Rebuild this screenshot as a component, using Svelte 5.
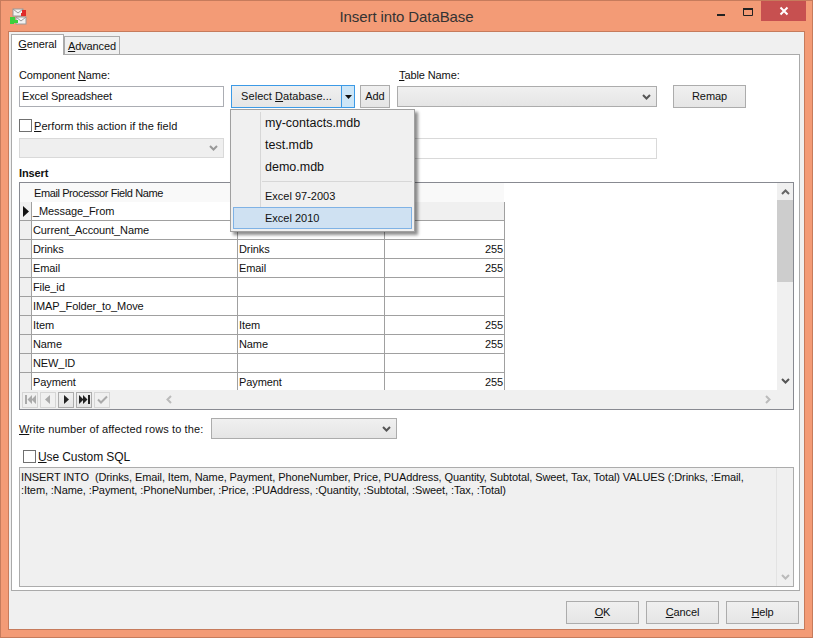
<script lang="ts">
    // grid rows: field name, table column, size
    const rows = [
        ['_Message_From', '', ''],
        ['Current_Account_Name', '', ''],
        ['Drinks', 'Drinks', '255'],
        ['Email', 'Email', '255'],
        ['File_id', '', ''],
        ['IMAP_Folder_to_Move', '', ''],
        ['Item', 'Item', '255'],
        ['Name', 'Name', '255'],
        ['NEW_ID', '', ''],
        ['Payment', 'Payment', '255']
    ];
    const files = ['my-contacts.mdb', 'test.mdb', 'demo.mdb'];
</script>

<div class="window">
    <header class="titlebar">
        <svg class="app-icon" width="18" height="18" viewBox="0 0 18 18">
            <rect x="4" y="2" width="10" height="7" fill="#f2f2f2" stroke="#9a9a9a" />
            <rect x="7" y="10" width="10" height="7" fill="#f2f2f2" stroke="#9a9a9a" />
            <path d="M7 10l5 4 5-4M4 2l5 4 5-4" fill="none" stroke="#9a9a9a" />
            <path d="M1 10h5v3h3v3H5v1H1z" fill="#3ccf3c" />
            <path d="M13 3h4v6h-5V6h1z" fill="#e02a2a" />
        </svg>
        <div class="title">Insert into DataBase</div>
        <div class="caption">
            <svg class="cap-btn" width="26" height="20" viewBox="0 0 26 20"><rect x="11" y="13" width="8" height="2" fill="#222" /></svg>
            <svg class="cap-btn" width="29" height="20" viewBox="0 0 29 20"><path d="M11.5 7.5h9v7h-9z" fill="none" stroke="#222" /><rect x="11" y="7" width="10" height="2" fill="#222" /></svg>
            <div class="close">
                <svg width="10" height="10" viewBox="0 0 10 10"><path d="M1.5 1.5l7 7M8.5 1.5l-7 7" stroke="#fff" stroke-width="2" /></svg>
            </div>
        </div>
    </header>

    <div class="client">
        <div class="tabs">
            <div class="tab active"><u>G</u>eneral</div>
            <div class="tab"><u>A</u>dvanced</div>
        </div>

        <section class="page">
            <div class="labels">
                <span class="name-label">Component <u>N</u>ame:</span>
                <span><u>T</u>able Name:</span>
            </div>

            <div class="row-main">
                <div class="input name">Excel Spreadsheet</div>
                <div class="split">
                    <div class="split-main">Select <u>D</u>atabase...</div>
                    <div class="split-arrow"><svg width="7" height="4" viewBox="0 0 7 4"><path d="M0 0h7L3.5 4z" fill="#111" /></svg></div>
                </div>
                <div class="btn add">Add</div>
                <div class="combo table-combo">
                    <svg width="9" height="6" viewBox="0 0 9 6"><path d="M1 1l3.5 3.5L8 1" fill="none" stroke="#555" stroke-width="2" /></svg>
                </div>
                <div class="btn remap">Remap</div>
            </div>

            <div class="check-row perform">
                <span class="box"></span><span><u>P</u>erform this action if the field</span>
            </div>

            <div class="row-cond">
                <div class="combo disabled">
                    <svg width="9" height="6" viewBox="0 0 9 6"><path d="M1 1l3.5 3.5L8 1" fill="none" stroke="#999" stroke-width="2" /></svg>
                </div>
                <div class="cond-value"></div>
            </div>

            <div class="insert">Insert</div>

            <div class="grid">
                <div class="grid-body">
                    <div class="sheet">
                        <div class="head">
                            <div class="rh"></div>
                            <div class="c1">Email Processor Field Name</div>
                        </div>
                        {#each rows as row, i}
                            <div class="line">
                                <div class="rh">
                                    {#if i === 0}
                                        <svg width="6" height="11" viewBox="0 0 6 11"><path d="M0 0l6 5.5L0 11z" fill="#111" /></svg>
                                    {/if}
                                </div>
                                <div class="c1">{row[0]}</div>
                                <div class="c2">{row[1]}</div>
                                <div class="c3" class:grey={i === 0}>{row[2]}</div>
                            </div>
                        {/each}
                    </div>
                    <div class="vscroll">
                        <svg width="9" height="6" viewBox="0 0 9 6"><path d="M1 5l3.5-3.5L8 5" fill="none" stroke="#666" stroke-width="2" /></svg>
                        <div class="track"><div class="thumb"></div></div>
                        <svg width="9" height="6" viewBox="0 0 9 6"><path d="M1 1l3.5 3.5L8 1" fill="none" stroke="#555" stroke-width="2" /></svg>
                    </div>
                </div>
                <div class="navbar">
                    <div class="nav off"><svg width="11" height="9" viewBox="0 0 11 9"><path d="M0 0h2v9H0zM7 0v9L2.500 4.500zM11 0v9L6.500 4.500z" fill="#aaa" /></svg></div>
                    <div class="nav off"><svg width="6" height="9" viewBox="0 0 6 9"><path d="M5 0v9L0 4.500z" fill="#aaa" /></svg></div>
                    <div class="nav on"><svg width="6" height="9" viewBox="0 0 6 9"><path d="M1 0v9l5-4.500z" fill="#222" /></svg></div>
                    <div class="nav on"><svg width="11" height="9" viewBox="0 0 11 9"><path d="M0 0v9l4.500-4.500zM4 0v9l4.500-4.500zM9 0h2v9H9z" fill="#222" /></svg></div>
                    <div class="nav off"><svg width="11" height="9" viewBox="0 0 11 9"><path d="M1 4.500l3 3 6-6" fill="none" stroke="#aaa" stroke-width="2" /></svg></div>
                    <svg class="hs-left" width="6" height="9" viewBox="0 0 6 9"><path d="M5 1L1.500 4.500 5 8" fill="none" stroke="#bbb" stroke-width="2" /></svg>
                    <svg class="hs-right" width="6" height="9" viewBox="0 0 6 9"><path d="M1 1l3.500 3.500L1 8" fill="none" stroke="#bbb" stroke-width="2" /></svg>
                </div>
            </div>

            <div class="row-affected">
                <span class="affected-label"><u>W</u>rite number of affected rows to the:</span>
                <div class="combo affected">
                    <svg width="9" height="6" viewBox="0 0 9 6"><path d="M1 1l3.5 3.5L8 1" fill="none" stroke="#555" stroke-width="2" /></svg>
                </div>
            </div>

            <div class="check-row sql">
                <span class="box"></span><span><u>U</u>se Custom SQL</span>
            </div>

            <div class="sqlbox">
                <div class="sqltext">INSERT INTO &nbsp;(Drinks, Email, Item, Name, Payment, PhoneNumber, Price, PUAddress, Quantity, Subtotal, Sweet, Tax, Total) VALUES (:Drinks, :Email, :Item, :Name, :Payment, :PhoneNumber, :Price, :PUAddress, :Quantity, :Subtotal, :Sweet, :Tax, :Total)</div>
                <div class="sqlscroll">
                    <svg width="9" height="6" viewBox="0 0 9 6"><path d="M1 1l3.5 3.5L8 1" fill="none" stroke="#bbb" stroke-width="2" /></svg>
                </div>
            </div>

            <div class="menu">
                {#each files as f}
                    <div class="item"><span>{f}</span></div>
                {/each}
                <div class="sep"></div>
                <div class="item small"><span>Excel 97-2003</span></div>
                <div class="item small hot"><span>Excel 2010</span></div>
            </div>
        </section>

        <footer class="actions">
            <div class="btn act"><u>O</u>K</div>
            <div class="btn act"><u>C</u>ancel</div>
            <div class="btn act"><u>H</u>elp</div>
        </footer>
    </div>
</div>

<style>
    :global(body) {
        margin: 0;
        background: #f39b76;
        font-family: "Liberation Sans", Arial, sans-serif;
        font-size: 11px;
        letter-spacing: -0.1px;
        color: #111;
    }

    u {
        text-underline-offset: 1px;
    }

    .window {
        width: 813px;
        height: 638px;
        box-sizing: border-box;
        border: 1px solid #c67b5c;
        display: flex;
        flex-direction: column;
        overflow: hidden;
    }

    .titlebar {
        height: 29px;
        margin-bottom: 1px;
        display: flex;
        align-items: flex-start;
        position: relative;
    }

    .app-icon {
        margin: 6px 0 0 8px;
    }

    .title {
        position: absolute;
        left: 0;
        right: 0;
        top: 7px;
        text-align: center;
        font-size: 15px;
        letter-spacing: -0.1px;
        color: #333;
    }

    .caption {
        margin-left: auto;
        margin-right: 6px;
        display: flex;
        position: relative;
    }

    .close {
        width: 45px;
        height: 20px;
        background: #c75050;
        display: flex;
        align-items: center;
        justify-content: center;
    }

    .client {
        width: 797px;
        height: 599px;
        margin-left: 7px;
        box-sizing: border-box;
        background: #f0f0f0;
        border: 1px solid #c67b5c;
        padding: 2px 4px 0 2px;
        display: flex;
        flex-direction: column;
    }

    .tabs {
        height: 20px;
        display: flex;
        align-items: flex-end;
        position: relative;
        z-index: 1;
    }

    .tab {
        box-sizing: border-box;
        height: 18px;
        line-height: 18px;
        border: 1px solid #aaa;
        border-bottom: 0;
        background: #f0f0f0;
        width: 56px;
        text-align: center;
    }

    .tab.active {
        height: 21px;
        line-height: 19px;
        width: 53px;
        background: #fff;
        margin-bottom: -1px;
    }

    .page {
        position: relative;
        height: 537px;
        box-sizing: border-box;
        background: #fff;
        border: 1px solid #aaa;
        padding: 14px 4px 0 7px;
        display: flex;
        flex-direction: column;
    }

    .labels {
        height: 15px;
        line-height: 13px;
        display: flex;
    }

    .name-label {
        width: 380px;
    }

    .row-main {
        display: flex;
        align-items: center;
        height: 23px;
        margin-top: 1px;
    }

    .input {
        box-sizing: border-box;
        border: 1px solid #abadb3;
        background: #fff;
        height: 21px;
        line-height: 19px;
        padding-left: 2px;
        letter-spacing: -0.15px;
    }

    .name {
        width: 205px;
    }

    .split {
        display: flex;
        height: 23px;
        margin-left: 7px;
    }

    .split-main,
    .split-arrow {
        box-sizing: border-box;
        border: 1px solid #3c9ae6;
        background: linear-gradient(#f0f0f0, #e5e5e5);
    }

    .split-main {
        width: 111px;
        line-height: 21px;
        text-align: center;
        letter-spacing: 0.05px;
    }

    .split-arrow {
        width: 14px;
        margin-left: -1px;
        background: #cde6f7;
        display: flex;
        align-items: center;
        justify-content: center;
    }

    .btn {
        box-sizing: border-box;
        border: 1px solid #acacac;
        background: linear-gradient(#f0f0f0, #e5e5e5);
        text-align: center;
        height: 23px;
        line-height: 21px;
    }

    .add {
        width: 30px;
        margin-left: 5px;
    }

    .combo {
        box-sizing: border-box;
        border: 1px solid #acacac;
        background: linear-gradient(#f0f0f0, #e5e5e5);
        height: 21px;
        display: flex;
        align-items: center;
        justify-content: flex-end;
        padding-right: 5px;
    }

    .table-combo {
        width: 260px;
        margin-left: 7px;
    }

    .remap {
        width: 73px;
        margin-left: 16px;
    }

    .check-row {
        display: flex;
        align-items: center;
        gap: 2px;
        height: 13px;
        margin-top: 11px;
    }

    .perform {
        letter-spacing: 0.05px;
    }

    .box {
        width: 13px;
        height: 13px;
        box-sizing: border-box;
        border: 1px solid #707070;
        background: #fff;
    }

    .row-cond {
        display: flex;
        margin-top: 6px;
    }

    .disabled {
        width: 205px;
        height: 20px;
        background: #efefef;
        border-color: #d9d9d9;
    }

    .cond-value {
        width: 425px;
        height: 21px;
        box-sizing: border-box;
        margin-left: 8px;
        border: 1px solid #d9d9d9;
    }

    .insert {
        font-weight: bold;
        height: 15px;
        line-height: 15px;
        margin-top: 7px;
    }

    .grid {
        width: 775px;
        height: 228px;
        margin-top: 1px;
        box-sizing: border-box;
        border: 1px solid #888a91;
        background: #f0f0f0;
        display: flex;
        flex-direction: column;
    }

    .grid-body {
        display: flex;
        height: 207px;
    }

    .sheet {
        width: 757px;
        background: #fff;
        overflow: hidden;
    }

    .head {
        display: flex;
        width: 484px;
        height: 19px;
        background: #f9f9f9;
        line-height: 20px;
        letter-spacing: -0.4px;
    }

    .head .rh {
        border: 0;
        width: 13px;
        background: #f9f9f9;
    }

    .head .c1 {
        border: 0;
        padding-left: 1px;
    }

    .line {
        display: flex;
        width: 485px;
        height: 19px;
        line-height: 19px;
    }

    .rh {
        box-sizing: border-box;
        width: 12px;
        background: #f0f0f0;
        border-right: 1px solid #a0a0a0;
        border-bottom: 1px solid #a0a0a0;
        display: flex;
        align-items: center;
        justify-content: center;
    }

    .c1,
    .c2,
    .c3 {
        box-sizing: border-box;
        border-right: 1px solid #a0a0a0;
        border-bottom: 1px solid #a0a0a0;
        padding: 0 1px;
        white-space: nowrap;
    }

    .c1 {
        width: 206px;
    }

    .c2 {
        width: 147px;
    }

    .c3 {
        width: 120px;
        text-align: right;
    }

    .grey {
        background: #f0f0f0;
    }

    .vscroll {
        width: 16px;
        display: flex;
        flex-direction: column;
        align-items: center;
        padding-top: 6px;
        box-sizing: border-box;
    }

    .track {
        width: 16px;
        flex: 1;
        margin: 5px 0 5px;
    }

    .thumb {
        height: 82px;
        background: #cdcdcd;
    }

    .vscroll svg:last-child {
        margin-bottom: 6px;
    }

    .navbar {
        height: 19px;
        display: flex;
        align-items: center;
        padding-left: 2px;
        gap: 2px;
        position: relative;
    }

    .nav {
        box-sizing: border-box;
        width: 16px;
        height: 16px;
        border: 1px solid #d5d5d5;
        display: flex;
        align-items: center;
        justify-content: center;
    }

    .nav.on {
        border-color: #acacac;
        background: linear-gradient(#f0f0f0, #e5e5e5);
    }

    .hs-left {
        margin-left: 54px;
    }

    .hs-right {
        margin-left: auto;
        margin-right: 22px;
    }

    .row-affected {
        display: flex;
        align-items: center;
        height: 21px;
        margin-top: 8px;
    }

    .affected-label {
        width: 192px;
        white-space: nowrap;
        letter-spacing: 0.12px;
    }

    .affected {
        width: 186px;
    }

    .sql {
        margin: 11px 0 0 4px;
        font-size: 12px;
    }

    .sqlbox {
        width: 775px;
        height: 120px;
        margin-top: 4px;
        box-sizing: border-box;
        border: 1px solid #acacac;
        background: #f0f0f0;
        display: flex;
    }

    .sqltext {
        flex: 1;
        padding: 3px 24px 2px 1px;
        line-height: 13px;
    }

    .sqlscroll {
        width: 17px;
        box-sizing: border-box;
        border-left: 1px solid #e3e3e3;
        display: flex;
        align-items: flex-end;
        justify-content: center;
        padding-bottom: 6px;
    }

    /* dropdown of the Select Database button */
    .menu {
        position: absolute;
        left: 218px;
        top: 54px;
        width: 185px;
        height: 123px;
        box-sizing: border-box;
        border: 1px solid #a0a0a0;
        background: #f0f0f0;
        box-shadow: 3px 3px 3px rgba(0, 0, 0, 0.45);
        padding: 2px;
        z-index: 2;
    }

    .menu::before {
        content: "";
        position: absolute;
        left: 29px;
        top: 2px;
        bottom: 2px;
        border-left: 1px solid #d7d7d7;
    }

    .item {
        height: 22px;
        line-height: 22px;
        box-sizing: border-box;
        padding-left: 32px;
        font-size: 12.5px;
        letter-spacing: 0;
        position: relative;
    }

    .item.small {
        font-size: 11px;
    }

    .sep {
        height: 1px;
        background: #d7d7d7;
        margin: 3px 0 3px 29px;
    }

    .hot {
        background: #cfe1f2;
        border: 1px solid #7fb2e5;
        line-height: 20px;
        padding-left: 31px;
    }

    .actions {
        display: flex;
        justify-content: flex-end;
        gap: 7px;
        margin-top: 10px;
        padding-right: 1px;
    }

    .act {
        width: 73px;
    }
</style>
